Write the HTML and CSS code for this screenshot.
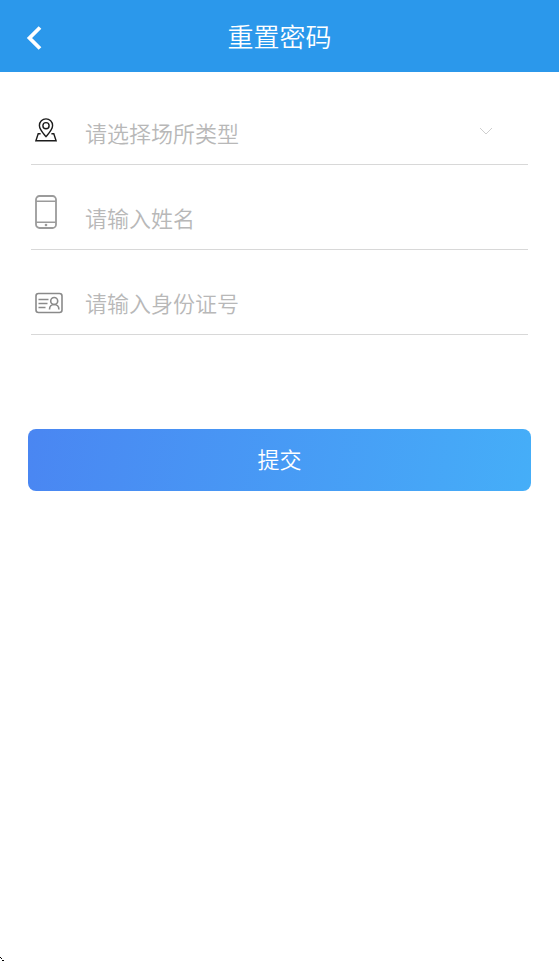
FILE: index.html
```html
<!DOCTYPE html>
<html lang="zh-CN">
<head>
<meta charset="utf-8">
<meta name="viewport" content="width=device-width, initial-scale=1">
<title>重置密码</title>
<link rel="stylesheet" href="styles.css">
</head>
<body>
<header class="bar">
  <button class="back" type="button" aria-label="返回">
    <svg width="16" height="24" viewBox="0 0 16 24" fill="none" stroke="#fff" stroke-width="3.8"><path d="M14 1.500 3.500 12 14 22.500"/></svg>
  </button>
  <h1 class="title">重置密码</h1>
</header>
<main>
  <form class="form">
    <div class="row">
      <label class="icon" for="place" aria-label="场所类型">
        <svg class="pin" width="22" height="24" viewBox="0 0 22 24" fill="none" stroke="#1c1c1c" stroke-width="1.4"><path d="M11 18.6C8 15 4.4 11.600 4.400 7.500a6.600 6.600 0 0 1 13.200 0C17.600 11.600 14 15 11 18.600Z"/><circle cx="11" cy="7.700" r="3.100"/><path d="M5.600 15.800H3.200L.9 22.800h20.200l-2.300-7h-2.400"/></svg>
      </label>
      <select class="field" id="place">
        <option>请选择场所类型</option>
      </select>
      <svg class="arrow" width="14" height="8" viewBox="0 0 14 8" fill="none" stroke="#cfcfcf"><path d="m1 1 6 6 6-6"/></svg>
    </div>
    <div class="row">
      <label class="icon" for="name" aria-label="姓名">
        <svg class="phone" width="22" height="34" viewBox="0 0 22 34" fill="none" stroke="#9b9b9b" stroke-width="1.8"><rect x="1" y="1" width="20" height="32" rx="3.500"/><path d="M1 6.200h20M1 27.200h20" stroke-width="1.400"/><circle cx="11" cy="30" r="1.300" fill="#9b9b9b" stroke="none"/></svg>
      </label>
      <input class="field" id="name" type="text" placeholder="请输入姓名">
    </div>
    <div class="row">
      <label class="icon" for="idno" aria-label="身份证号">
        <svg width="28" height="22" viewBox="0 0 28 22" fill="none" stroke="#8a8a8a" stroke-width="1.600"><rect x="1" y="1.500" width="26" height="19" rx="2.500"/><path d="M3.500 7.500h10M3.500 11.500h9M3.500 15.500h7"/><circle cx="19.200" cy="9" r="3.500"/><path d="M14.500 17.500c0-3 2-5 4.700-5s4.700 2 4.700 5"/></svg>
      </label>
      <input class="field" id="idno" type="text" placeholder="请输入身份证号">
    </div>
    <button class="submit" type="button">提交</button>
  </form>
</main>
<svg class="corner" width="4" height="4" viewBox="0 0 4 4" aria-hidden="true"><path d="M0 0h1v1H0zM1 1h1v1H1zM2 3h2v1H2z"/></svg>
</body>
</html>
```
FILE: styles.css
```css
* {
  box-sizing: border-box;
}

body {
  margin: 0;
  background: #fff;
  font-family: "Noto Sans CJK SC", sans-serif;
  font-weight: 350;
}

button,
select,
input {
  font: inherit;
}

.bar {
  display: grid;
  grid-template-columns: 64px 1fr 64px;
  align-items: center;
  height: 72px;
  background: #2b98eb;
  color: #fff;
}

.back {
  display: flex;
  align-items: center;
  height: 72px;
  padding: 4px 0 0 26px;
  border: 0;
  background: none;
}

.title {
  margin: 0;
  font-size: 26px;
  font-weight: 350;
  line-height: 72px;
  text-align: center;
}

.form {
  padding: 8px 28px;
}

.row {
  display: flex;
  align-items: center;
  height: 85px;
  margin: 0 3px;
  padding-top: 20px;
  border-bottom: 1px solid #d8d8d8;
}

.icon {
  display: flex;
  flex: none;
  width: 54px;
  padding: 2px 0 0 4px;
}

.pin {
  margin-bottom: 6px;
}

.phone {
  margin-bottom: 12px;
}

.field {
  flex: 1;
  min-width: 0;
  height: 44px;
  margin: 0;
  padding: 0;
  border: 0;
  outline: 0;
  appearance: none;
  background: none;
  color: #b8b8b8;
  font-size: 22px;
}

.field::placeholder {
  color: #b8b8b8;
  opacity: 1;
}

.arrow {
  flex: none;
  margin: 0 35px 2px 0;
}

.submit {
  display: block;
  width: 100%;
  height: 62px;
  margin-top: 94px;
  padding: 0 0 4px;
  border: 0;
  border-radius: 8px;
  background: linear-gradient(100deg, #4a86f2, #45aef8);
  color: #fff;
  font-size: 22px;
}

.corner {
  position: fixed;
  bottom: 0;
  left: 0;
}
```
